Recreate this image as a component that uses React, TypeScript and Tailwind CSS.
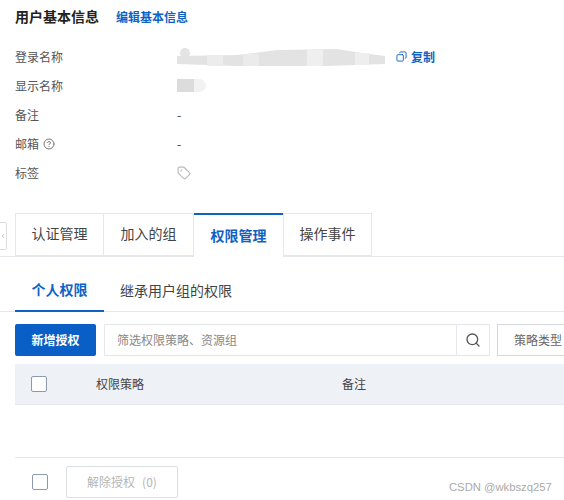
import { Copy, Search, Tag, CircleHelp, ChevronLeft } from "lucide-react";
import type { ReactNode } from "react";

const tabs = ["认证管理", "加入的组", "权限管理", "操作事件"];

function InfoRow({ label, children }: { label: ReactNode; children: ReactNode }) {
  return (
    <div className="flex h-[29px] items-center text-xs">
      <div className="flex w-[162px] items-center gap-1 text-[#555]">{label}</div>
      <div className="flex items-center text-[#333]">{children}</div>
    </div>
  );
}

function Checkbox() {
  return <div className="h-4 w-4 rounded-[2px] border border-[#8d99ae] bg-white" />;
}

// the smeared-out account name
function Smudge() {
  return (
    <svg width="208" height="20" viewBox="0 0 208 20" className="-my-1">
      <circle cx="8" cy="6" r="5" fill="#e4e4e4" />
      <path d="M0 9 L60 8 L100 3 L160 2 L185 6 L208 9 L208 17 L150 19 L60 19 L0 17 Z" fill="#e3e3e3" />
      <rect x="30" y="8" width="16" height="11" fill="#ececec" />
      <rect x="66" y="7" width="16" height="12" fill="#ebebeb" />
      <rect x="130" y="3" width="16" height="16" fill="#efefef" />
      <rect x="178" y="6" width="14" height="12" fill="#eeeeee" />
    </svg>
  );
}

export default function App() {
  return (
    <div className="relative h-[500px] w-[564px] overflow-hidden bg-white font-['Noto_Sans_CJK_SC','Liberation_Sans',sans-serif]">
      <div className="flex h-[32px] items-center pl-[15px]">
        <h1 className="text-sm font-bold text-[#222]">用户基本信息</h1>
        <a className="ml-[17px] mt-[2px] text-xs font-semibold text-[#0f62c4]">编辑基本信息</a>
      </div>

      <div className="mt-[10px] pl-[15px]">
        <InfoRow label="登录名称">
          <Smudge />
          <Copy size={11} className="ml-[11px] -scale-x-100 text-[#0f62c4]" />
          <span className="ml-[4px] font-semibold text-[#0f62c4]">复制</span>
        </InfoRow>
        <InfoRow label="显示名称">
          <div className="h-[13px] w-[17px] bg-[#dcdcdc]" />
          <div className="h-[13px] w-[12px] rounded-r-full bg-[#f2f2f2]" />
        </InfoRow>
        <InfoRow label="备注">-</InfoRow>
        <InfoRow
          label={
            <>
              邮箱
              <CircleHelp size={12} className="text-[#777]" />
            </>
          }
        >
          -
        </InfoRow>
        <InfoRow label="标签">
          <Tag size={14} className="text-[#bbb]" />
        </InfoRow>
      </div>

      <div className="mt-[26px] flex h-[44px] border-b border-[#e5e7eb] pl-[15px]">
        {tabs.map((t, i) =>
          i === 2 ? (
            <div
              key={t}
              className="-mb-px flex h-[44px] w-[89px] items-center justify-center border-t-2 border-[#0f62c4] bg-white pb-[3px] text-sm font-semibold text-[#0f62c4]"
            >
              {t}
            </div>
          ) : (
            <div
              key={t}
              className={`flex h-[43px] items-center justify-center border-y border-r border-[#e5e7eb] pb-[3px] text-sm text-[#444] ${
                i === 0 ? "w-[89px] border-l" : i === 1 ? "w-[90px]" : "w-[89px] border-l"
              }`}
            >
              {t}
            </div>
          ),
        )}
      </div>

      <div className="flex h-[55px] border-b border-[#e5e7eb] pl-[15px]">
        <div className="-mb-px flex h-[55px] w-[89px] items-center justify-center border-b-2 border-[#0f62c4] pt-[11px] text-sm font-semibold text-[#0f62c4]">
          个人权限
        </div>
        <div className="ml-4 flex items-center pt-[11px] text-sm text-[#444]">继承用户组的权限</div>
      </div>

      <div className="mt-3 flex h-8 pl-[15px]">
        <button className="h-8 w-[81px] shrink-0 rounded-[2px] bg-[#0a5fc6] text-xs font-semibold text-white">新增授权</button>
        <div className="ml-2 flex h-8 w-[386px] shrink-0 border border-[#e5e7eb]">
          <div className="flex flex-1 items-center pl-3 text-xs text-[#888]">筛选权限策略、资源组</div>
          <div className="flex w-[33px] items-center justify-center border-l border-[#e5e7eb]">
            <Search size={16} className="text-[#555]" />
          </div>
        </div>
        <div className="ml-[7px] flex h-8 w-[100px] shrink-0 items-center border border-[#d5d8dd] pl-4 text-xs text-[#666]">
          策略类型
        </div>
      </div>

      <div className="ml-[15px] mt-2 flex h-[41px] items-center border-b border-[#e5e7eb] bg-[#eef1f6] text-xs text-[#444]">
        <div className="ml-4">
          <Checkbox />
        </div>
        <div className="ml-[49px] w-[246px]">权限策略</div>
        <div>备注</div>
      </div>

      <div className="ml-[15px] mt-[52px] flex h-[42px] items-end border-t border-[#e5e7eb]">
        <div className="mb-[9px] ml-[17px]">
          <Checkbox />
        </div>
      </div>

      <button className="absolute left-[66px] top-[466px] h-8 w-[112px] rounded-[2px] border border-[#dcdfe4] bg-white text-xs text-[#b5b5b5]">
        解除授权<span className="ml-[7px]">(0)</span>
      </button>

      <div className="absolute left-0 top-[222px] flex h-7 w-[7px] items-center justify-center rounded-r-[2px] border border-l-0 border-[#ddd] bg-white">
        <ChevronLeft size={8} className="text-[#888]" />
      </div>

      <div className="absolute left-[449px] top-[479px] font-['Liberation_Sans',sans-serif] text-[11.25px] text-[#aaa]">
        CSDN @wkbszq257
      </div>
    </div>
  );
}
